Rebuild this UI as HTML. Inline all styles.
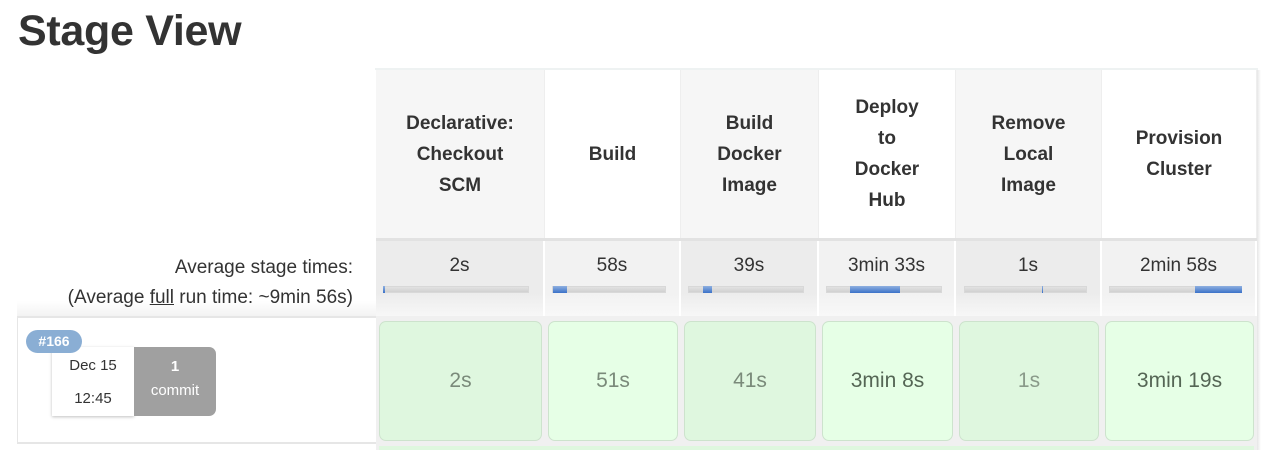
<!DOCTYPE html>
<html><head><meta charset="utf-8"><style>
body{margin:0;width:1268px;height:450px;overflow:hidden;background:#fff;font-family:"Liberation Sans",sans-serif;color:#333;position:relative}
.a{position:absolute}
h1{position:absolute;left:18px;top:7px;margin:0;font-size:43px;font-weight:bold;color:#333;letter-spacing:-0.3px}
.hd{position:absolute;top:70px;height:168px;display:flex;align-items:center;justify-content:center;text-align:center;font-weight:bold;font-size:19px;line-height:31px;color:#333;border-right:1px solid #eee;box-sizing:border-box}
.av{position:absolute;top:241px;height:75px;text-align:center;font-size:19px;color:#333;box-sizing:border-box;border-right:2px solid #fff;background:linear-gradient(#ececec 70%,#f7f7f7)}
.av span{display:block;margin-top:14px}
.bar{position:absolute;top:286px;height:7px;background:linear-gradient(#e2e2e2,#d0d0d0);border:1px solid #d8d8d8;box-sizing:border-box}
.blue{position:absolute;top:286px;height:7px;background:linear-gradient(#8fb0e0,#3b72c8)}
.cell{position:absolute;top:321px;height:120px;border:1px solid #cde3cd;border-radius:7px;box-sizing:border-box;display:flex;align-items:center;justify-content:center;font-size:21px}
</style></head><body>
<h1>Stage View</h1>
<div class="a" style="left:375px;top:68px;width:883px;height:2px;background:#eef2f2"></div>
<div class="a" style="left:1257px;top:70px;width:4px;height:380px;background:linear-gradient(90deg,#e6e6e6,#fff)"></div>
<div class="hd" style="left:376px;width:169px;background:#f6f6f6">Declarative:<br>Checkout<br>SCM</div>
<div class="hd" style="left:545px;width:136px;background:#fff">Build</div>
<div class="hd" style="left:681px;width:138px;background:#f6f6f6">Build<br>Docker<br>Image</div>
<div class="hd" style="left:819px;width:137px;background:#fff">Deploy<br>to<br>Docker<br>Hub</div>
<div class="hd" style="left:956px;width:146px;background:#f6f6f6">Remove<br>Local<br>Image</div>
<div class="hd" style="left:1102px;width:155px;background:#fff">Provision<br>Cluster</div>
<div class="a" style="left:376px;top:238px;width:881px;height:3px;background:#e2e2e2"></div>
<div class="a" style="left:17px;top:241px;width:359px;height:75px;background:linear-gradient(#fff 80%,#f3f3f3)"></div>
<div class="a" style="left:17px;top:253px;width:336px;text-align:right;font-size:19px;line-height:30px;color:#333">Average stage times:<br>(Average <u>full</u> run time: ~9min 56s)</div>
<div class="av" style="left:376px;width:169px"><span>2s</span></div>
<div class="av" style="left:545px;width:136px;background:linear-gradient(#f2f2f2 70%,#f8f8f8)"><span>58s</span></div>
<div class="av" style="left:681px;width:138px"><span>39s</span></div>
<div class="av" style="left:819px;width:137px;background:linear-gradient(#f2f2f2 70%,#f8f8f8)"><span>3min 33s</span></div>
<div class="av" style="left:956px;width:146px"><span>1s</span></div>
<div class="av" style="left:1102px;width:155px;background:linear-gradient(#f2f2f2 70%,#f8f8f8)"><span>2min 58s</span></div>
<div class="bar" style="left:383px;width:146px"></div><div class="blue" style="left:383px;width:2px"></div>
<div class="bar" style="left:552px;width:114px"></div><div class="blue" style="left:553px;width:14px"></div>
<div class="bar" style="left:688px;width:116px"></div><div class="blue" style="left:703px;width:9px"></div>
<div class="bar" style="left:826px;width:116px"></div><div class="blue" style="left:850px;width:50px"></div>
<div class="bar" style="left:964px;width:123px"></div><div class="blue" style="left:1042px;width:1px"></div>
<div class="bar" style="left:1109px;width:133px"></div><div class="blue" style="left:1195px;width:47px"></div>
<div class="a" style="left:17px;top:316px;width:359px;height:2px;background:#e6e6e6"></div>
<div class="a" style="left:17px;top:318px;width:1px;height:125px;background:#e6e6e6"></div>
<div class="a" style="left:17px;top:442px;width:359px;height:2px;background:#e6e6e6"></div>
<div class="a" style="left:376px;top:316px;width:881px;height:134px;background:#f0f0f0"></div>
<div class="a" style="left:52px;top:347px;width:82px;height:69px;background:#fff;box-shadow:0 1px 3px rgba(0,0,0,.25);text-align:center;font-size:15px;line-height:33px;padding-top:2px;box-sizing:border-box">Dec 15<br>12:45</div>
<div class="a" style="left:134px;top:347px;width:82px;height:69px;background:#a0a0a0;border-radius:0 7px 7px 0;color:#fff;text-align:center;font-size:15px;line-height:24px;padding-top:8px;box-sizing:border-box"><b>1</b><br>commit</div>
<div class="a" style="left:26px;top:330px;width:56px;height:23px;background:#8aaed4;border-radius:12px;color:#fff;font-weight:bold;font-size:14px;line-height:23px;text-align:center">#166</div>
<div class="cell" style="left:379px;width:163px;background:#dff7df;color:#7a8a7a">2s</div>
<div class="cell" style="left:548px;width:130px;background:#e6ffe6;color:#7a8a7a">51s</div>
<div class="cell" style="left:684px;width:132px;background:#dff7df;color:#7a8a7a">41s</div>
<div class="cell" style="left:822px;width:131px;background:#e6ffe6;color:#556655">3min 8s</div>
<div class="cell" style="left:959px;width:140px;background:#dff7df;color:#8a9a8a">1s</div>
<div class="cell" style="left:1105px;width:149px;background:#e6ffe6;color:#556655">3min 19s</div>
<div class="a" style="left:379px;top:446px;width:875px;height:4px;background:#dff7df"></div>
</body></html>
